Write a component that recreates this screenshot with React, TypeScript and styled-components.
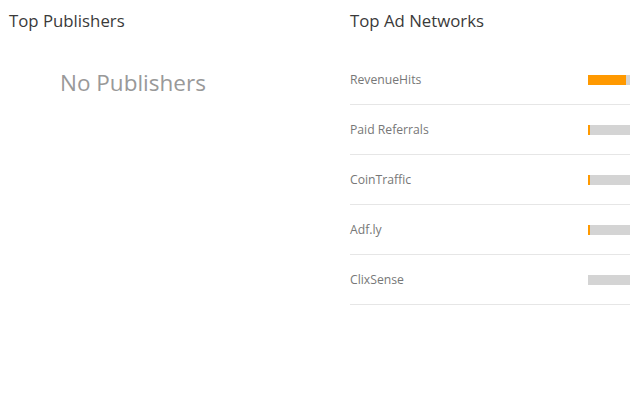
import styled, { createGlobalStyle } from 'styled-components';

const GlobalStyle = createGlobalStyle`
  body {
    margin: 0;
    background: #fff;
    font-family: "Open Sans", "Liberation Sans", sans-serif;
  }
`;

const Page = styled.div`
  display: grid;
  grid-template-columns: 341px 280px;
  padding: 9px 0 0 9px;
`;

const Column = styled.section`
  display: flex;
  flex-direction: column;
`;

const Title = styled.h2`
  margin: 0;
  font-size: 16.8px;
  line-height: 23px;
  font-weight: 400;
  color: #3a3a3a;
`;

const Empty = styled.h3`
  margin: 35px 0 0 51px;
  font-size: 22.5px;
  line-height: 31px;
  font-weight: 400;
  color: #999;
`;

const List = styled.ul`
  list-style: none;
  margin: 23px 0 0;
  padding: 0;
`;

const Row = styled.li`
  display: flex;
  align-items: center;
  justify-content: space-between;
  height: 49px;
  border-bottom: 1px solid #e6e6e6;
  font-size: 12.2px;
  color: #777;
`;

const Bar = styled.div`
  width: 42px;
  height: 10px;
  background: #d4d4d4;
  display: flex;
`;

const Fill = styled.div`
  height: 100%;
  background: #ff9900;
`;

interface Network {
  name: string;
  pct: number;
}

const networks: Network[] = [
  { name: 'RevenueHits', pct: 90 },
  { name: 'Paid Referrals', pct: 5 },
  { name: 'CoinTraffic', pct: 4 },
  { name: 'Adf.ly', pct: 4 },
  { name: 'ClixSense', pct: 0 },
];

export default function App() {
  return (
    <>
      <GlobalStyle />
      <Page>
        <Column>
          <Title>Top Publishers</Title>
          <Empty>No Publishers</Empty>
        </Column>
        <Column>
          <Title>Top Ad Networks</Title>
          <List>
            {networks.map((n) => (
              <Row key={n.name}>
                <span>{n.name}</span>
                <Bar>
                  <Fill style={{ width: `${n.pct}%` }} />
                </Bar>
              </Row>
            ))}
          </List>
        </Column>
      </Page>
    </>
  );
}
